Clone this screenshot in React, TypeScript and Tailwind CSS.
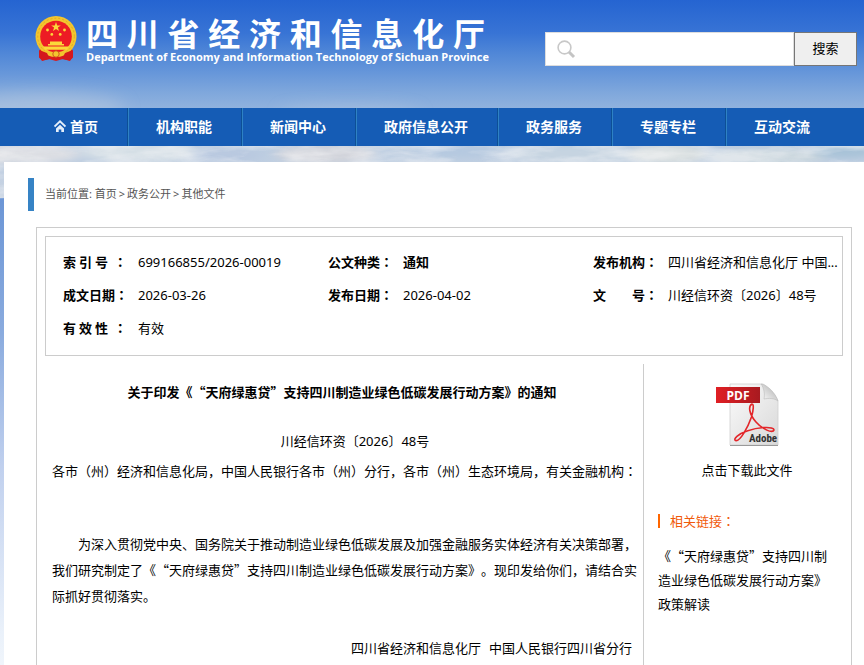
import React from "react";

const SC = "font-['Noto_Sans_CJK_SC','Noto_Sans',sans-serif]";

/* Full-width colons are set centred in their cell. */
function Cn({ children }: { children: string }) {
  return (
    <>
      {children.split(/(：)/).map((part, i) =>
        part === "：" ? (
          <span key={i} lang="zh-Hant" className="font-['Noto_Sans_CJK_TC',sans-serif]">
            {part}
          </span>
        ) : (
          part
        ),
      )}
    </>
  );
}

function Sky() {
  return (
    <svg className="absolute inset-0 -z-10 h-full w-full" viewBox="0 0 864 665" preserveAspectRatio="none" aria-hidden="true">
      <defs>
        <linearGradient id="sky" x1="0" y1="0" x2="0" y2="1">
          <stop offset="0" stopColor="#2564d1" />
          <stop offset="0.05" stopColor="#3874d5" />
          <stop offset="0.08" stopColor="#5087d7" />
          <stop offset="0.11" stopColor="#6797da" />
          <stop offset="0.14" stopColor="#80a8dc" />
          <stop offset="0.165" stopColor="#92b3de" />
          <stop offset="0.21" stopColor="#b9cbe0" />
          <stop offset="0.297" stopColor="#c9d4e3" />
          <stop offset="0.298" stopColor="#6c96d6" />
          <stop offset="0.5" stopColor="#8aabde" />
          <stop offset="0.7" stopColor="#c0d0ee" />
          <stop offset="0.95" stopColor="#eaf1fa" />
          <stop offset="1" stopColor="#f0f5fb" />
        </linearGradient>
        <filter id="soft" x="-20%" y="-50%" width="140%" height="200%">
          <feGaussianBlur stdDeviation="8" />
        </filter>
        <filter id="wisp" x="-20%" y="-50%" width="140%" height="200%">
          <feGaussianBlur stdDeviation="6 3" />
        </filter>
        <filter id="cloud" x="0" y="0" width="100%" height="100%">
          <feTurbulence type="fractalNoise" baseFrequency="0.02 0.08" numOctaves="4" seed="8" />
          <feColorMatrix values="0 0 0 0 0.93  0 0 0 0 0.93  0 0 0 0 0.94  2.6 0 0 0 -0.95" />
        </filter>
      </defs>
      <rect width="864" height="665" fill="url(#sky)" />
      <g filter="url(#soft)" fill="#bccbdf">
        <ellipse cx="40" cy="108" rx="85" ry="16" opacity="0.5" />
        <ellipse cx="350" cy="114" rx="70" ry="7" opacity="0.5" />
      </g>
      <g filter="url(#wisp)">
        <ellipse cx="20" cy="154" rx="60" ry="10" fill="#dcdee3" />
        <ellipse cx="140" cy="152" rx="60" ry="10" fill="#d5dfe6" />
        <ellipse cx="225" cy="155" rx="36" ry="8" fill="#b9c9e0" />
        <ellipse cx="325" cy="154" rx="50" ry="10" fill="#d2d4db" />
        <ellipse cx="455" cy="151" rx="40" ry="6" fill="#b5c9e0" />
        <ellipse cx="580" cy="154" rx="70" ry="9" fill="#c6d4e1" />
        <ellipse cx="668" cy="154" rx="40" ry="10" fill="#d9dfe0" />
        <ellipse cx="770" cy="156" rx="60" ry="8" fill="#cbd7de" />
        <ellipse cx="845" cy="150" rx="34" ry="8" fill="#a9c3d8" />
      </g>
      <rect y="140" width="864" height="58" filter="url(#cloud)" opacity="0.5" />
    </svg>
  );
}

function Emblem() {
  return (
    <svg className="mt-[2px] h-[46px] w-[42px] shrink-0" viewBox="0 0 42 46" aria-hidden="true">
      <path d="M5 33 L37 33 L37 41 L35 45 L28 43 L21 45 L14 43 L7 45 L5 41 Z" fill="#d91a1e" />
      <circle cx="21" cy="20.5" r="20.5" fill="#f3c62e" />
      <circle cx="21" cy="20.5" r="18.3" fill="none" stroke="#e0a726" strokeWidth="1" strokeDasharray="2 2" />
      <circle cx="21" cy="20.5" r="15.8" fill="#ed1c24" />
      <path d="M21 6 l1.2 3.4 h3.6 l-2.9 2.1 1.1 3.5 -3 -2.1 -3 2.1 1.1 -3.5 -2.9 -2.1 h3.6z" fill="#fbd83a" />
      <g fill="#fbd83a">
        <circle cx="12.5" cy="14" r="1.4" />
        <circle cx="29.5" cy="14" r="1.4" />
        <circle cx="16.8" cy="18.4" r="1.4" />
        <circle cx="25.2" cy="18.4" r="1.4" />
        <path d="M15 25.5 h12 v2.5 h2 v1.5 h-16 v-1.5 h2z" />
        <path d="M8 30.5 h26 l-2 3.2 h-22z" />
      </g>
      <path d="M9 35 q12 5 24 0 l-4 4 h-16z" fill="#f3c62e" />
      <path d="M4 34 l8 3 l3 6 l-8 1.5 l-3 -3z M38 34 l-8 3 l-3 6 l8 1.5 l3 -3z" fill="#d4181d" />
      <circle cx="21" cy="38" r="3.2" fill="#f3c62e" stroke="#c8401a" strokeWidth="0.8" />
    </svg>
  );
}

function PdfIcon() {
  return (
    <svg className="h-[66px] w-[66px]" viewBox="0 0 66 66" role="img" aria-label="PDF Adobe">
      <defs>
        <linearGradient id="page" x1="0" y1="0" x2="1" y2="1">
          <stop offset="0" stopColor="#fbfbfb" />
          <stop offset="1" stopColor="#d8d8d8" />
        </linearGradient>
        <linearGradient id="tab" x1="0" y1="0" x2="1" y2="0">
          <stop offset="0" stopColor="#e01f24" />
          <stop offset="1" stopColor="#a81a20" />
        </linearGradient>
        <linearGradient id="fold" x1="0" y1="1" x2="1" y2="0">
          <stop offset="0" stopColor="#ffffff" />
          <stop offset="1" stopColor="#a8a8a8" />
        </linearGradient>
      </defs>
      <path d="M16 2 H49 C54 5 61 12 64 19 V63 H16 Z" fill="url(#page)" stroke="#cfcfcf" strokeWidth="0.8" />
      <path d="M16 63.5 H64" stroke="#9a9a9a" strokeWidth="1.2" />
      <path d="M47 2 C54 3 62 12 64 19 C60 16 55 16 50 17 C51 12 50 6 47 2 Z" fill="url(#fold)" stroke="#bbb" strokeWidth="0.6" />
      <path
        d="M38 22 C34 24 35 32 42 40 C48 47 59 52 60 48 C60 44 44 45 33 49 C24 52 19 57 21.500 58.500 C26 60 34 45 37.500 35 C39.500 28 40 22 38 22 Z"
        fill="none"
        stroke="#e3262a"
        strokeWidth="1.600"
      />
      <rect x="2" y="5" width="44" height="16" fill="url(#tab)" />
      <text x="24" y="17.500" textAnchor="middle" fill="#fff" className="font-['Open_Sans',sans-serif] text-[12px] font-bold">PDF</text>
      <text x="49" y="60" textAnchor="middle" fill="#333" className="font-['Liberation_Sans_Narrow','Roboto_Condensed','Roboto',sans-serif] text-[11px] font-bold">Adobe</text>
    </svg>
  );
}

function HomeIcon() {
  return (
    <svg className="h-3 w-3" viewBox="0 0 12 12" aria-hidden="true">
      <path d="M0.500 6.500 L6 1.300 L11.500 6.500" fill="none" stroke="#e4eefa" strokeWidth="1.900" />
      <path d="M6 4.800 L10 8.400 V12 H7.300 V9.400 H4.700 V12 H2 V8.400 Z" fill="#e4eefa" />
    </svg>
  );
}

const nav = ["首页", "机构职能", "新闻中心", "政府信息公开", "政务服务", "专题专栏", "互动交流"];

function Meta({ label, children, bold }: { label: string; children: string; bold?: boolean }) {
  return (
    <div className="flex min-w-0">
      <dt className={`w-[75px] shrink-0 whitespace-pre font-bold ${SC}`}>
        <Cn>{label}</Cn>
      </dt>
      <dd className={`whitespace-nowrap ${bold ? "font-bold" : ""}`}>{children}</dd>
    </div>
  );
}

export default function App() {
  return (
    <div
      lang="zh-CN"
      className="relative isolate min-h-screen overflow-hidden font-['Noto_Sans','Noto_Sans_CJK_SC',sans-serif] text-[13px] text-black [text-spacing-trim:space-all]"
    >
      <Sky />
      <header className="flex h-[108px] items-start justify-between pl-[35px] pr-[7px]">
        <div className="flex pt-[14px]">
          <Emblem />
          <div className="ml-[9px] w-[399px] text-white">
            <h1 className={`flex justify-between text-[32px] leading-9 font-bold ${SC}`}>
              {[..."四川省经济和信息化厅"].map((c) => (
                <span key={c}>{c}</span>
              ))}
            </h1>
            <p className="font-['Open_Sans','Noto_Sans',sans-serif] text-[11px] leading-[14px] font-bold whitespace-nowrap">
              Department of Economy and Information Technology of Sichuan Province
            </p>
          </div>
        </div>
        <form className="flex pt-8" onSubmit={(e) => e.preventDefault()}>
          <label className="flex h-[34px] w-[249px] items-center border border-[#ddd] bg-white pl-[11px]">
            <svg className="h-[19px] w-[19px] shrink-0" viewBox="0 0 19 19" aria-hidden="true">
              <circle cx="7.500" cy="7.500" r="6.400" fill="none" stroke="#c8c8c8" strokeWidth="1.600" />
              <path d="M12 12 L17 17" stroke="#c4c4c4" strokeWidth="3" />
            </svg>
            <input type="text" aria-label="搜索" className="h-full min-w-0 flex-1 px-2 outline-none" />
          </label>
          <button type="submit" className="h-[34px] w-[63px] border border-[#767676] bg-[#efefef]">
            搜索
          </button>
        </form>
      </header>

      <nav className="bg-[#155cb5] pl-[27px]">
        <ul className={`flex h-[38px] text-[14px] font-bold text-white ${SC}`}>
          {nav.map((item, i) => (
            <li
              key={item}
              className={
                i === nav.length - 1 ? "" : "border-r border-[#2f82c4] shadow-[inset_-1px_0_0_#0d4f96]"
              }
            >
              <a href="#" className="flex h-9 items-center gap-1 pr-[30px] pl-[27px]">
                {i === 0 && <HomeIcon />}
                {item}
              </a>
            </li>
          ))}
        </ul>
      </nav>

      <main className="mt-4 ml-1 min-h-[503px] bg-white pt-4 pr-3 pl-6">
        <div className="flex h-[33px] items-center border-l-6 border-[#3683c5] pl-[11px] text-[11px] text-[#555]">
          <span>当前位置:&nbsp;</span>
          <a href="#">首页</a>
          <span className="px-[2px]">&gt;</span>
          <a href="#">政务公开</a>
          <span className="px-[2px]">&gt;</span>
          <a href="#">其他文件</a>
        </div>

        <div className="mt-4 ml-2 border border-b-0 border-[#ccc] px-2 pt-2">
          <dl className="grid grid-cols-[265px_265px_minmax(0,1fr)] gap-y-[13px] border border-[#ccc] pt-[15px] pb-[17px] pl-[17px] leading-5">
            <Meta label="索 引 号  ：">699166855/2026-00019</Meta>
            <Meta label="公文种类：" bold>通知</Meta>
            <Meta label="发布机构：">四川省经济和信息化厅 中国...</Meta>
            <Meta label="成文日期：">2026-03-26</Meta>
            <Meta label="发布日期：">2026-04-02</Meta>
            <Meta label="文　　号：">川经信环资〔2026〕48号</Meta>
            <Meta label="有 效 性  ：">有效</Meta>
          </dl>

          <div className="mt-2 flex">
            <article className={`min-h-[302px] min-w-0 flex-1 border-r border-[#ccc] pr-1 pl-[7px] ${SC}`}>
              <h2 className="pt-4 pr-[7px] text-center leading-6 font-bold">关于印发《“天府绿惠贷”支持四川制造业绿色低碳发展行动方案》的通知</h2>
              <p className="pt-6 pr-[7px] text-center indent-[26px] font-['Noto_Sans','Noto_Sans_CJK_SC',sans-serif] leading-[26px]">
                川经信环资〔2026〕48号
              </p>
              <p className="pt-1 leading-[26px]">
                <Cn>各市（州）经济和信息化局，中国人民银行各市（州）分行，各市（州）生态环境局，有关金融机构：</Cn>
              </p>
              <p className="pt-[47px] indent-[26px] leading-[26px]">
                <Cn>为深入贯彻党中央、国务院关于推动制造业绿色低碳发展及加强金融服务实体经济有关决策部署，我们研究制定了《“天府绿惠贷”支持四川制造业绿色低碳发展行动方案》。现印发给你们，请结合实际抓好贯彻落实。</Cn>
              </p>
              <p className="flex justify-end gap-2 pt-[26px] pr-[7px] leading-[26px]">
                <span>四川省经济和信息化厅</span>
                <span>中国人民银行四川省分行</span>
              </p>
            </article>
            <aside className={`w-[199px] shrink-0 pt-[18px] pl-[14px] ${SC}`}>
              <a href="#" className="flex flex-col items-center pr-[7px]">
                <PdfIcon />
                <span className="pt-3 leading-5">点击下载此文件</span>
              </a>
              <h3 className="mt-[34px] flex h-[14px] items-center border-l-2 border-[#f60] pl-[10px] text-[#f15a0a]">
                <Cn>相关链接：</Cn>
              </h3>
              <a href="#" className="mt-4 block w-[170px] leading-6">
                《“天府绿惠贷”支持四川制造业绿色低碳发展行动方案》政策解读
              </a>
            </aside>
          </div>
        </div>
      </main>
    </div>
  );
}
